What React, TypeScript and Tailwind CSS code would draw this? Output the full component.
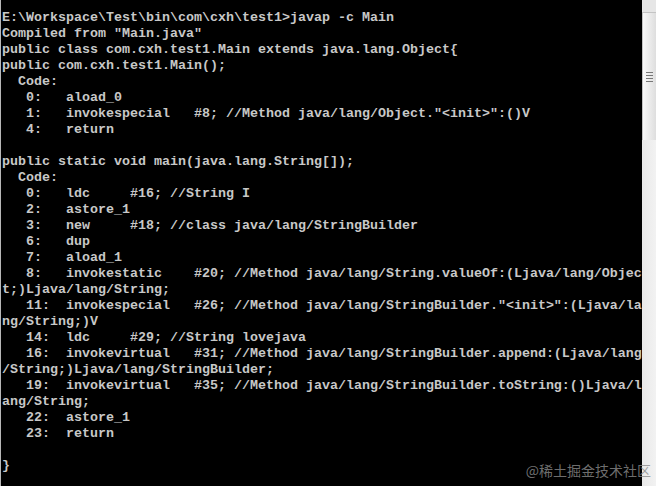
const lines: string[] = [
  "E:\\Workspace\\Test\\bin\\com\\cxh\\test1>javap -c Main",
  'Compiled from "Main.java"',
  "public class com.cxh.test1.Main extends java.lang.Object{",
  "public com.cxh.test1.Main();",
  "  Code:",
  "   0:   aload_0",
  '   1:   invokespecial   #8; //Method java/lang/Object."<init>":()V',
  "   4:   return",
  "",
  "public static void main(java.lang.String[]);",
  "  Code:",
  "   0:   ldc     #16; //String I",
  "   2:   astore_1",
  "   3:   new     #18; //class java/lang/StringBuilder",
  "   6:   dup",
  "   7:   aload_1",
  "   8:   invokestatic    #20; //Method java/lang/String.valueOf:(Ljava/lang/Objec",
  "t;)Ljava/lang/String;",
  '   11:  invokespecial   #26; //Method java/lang/StringBuilder."<init>":(Ljava/la',
  "ng/String;)V",
  "   14:  ldc     #29; //String lovejava",
  "   16:  invokevirtual   #31; //Method java/lang/StringBuilder.append:(Ljava/lang",
  "/String;)Ljava/lang/StringBuilder;",
  "   19:  invokevirtual   #35; //Method java/lang/StringBuilder.toString:()Ljava/l",
  "ang/String;",
  "   22:  astore_1",
  "   23:  return",
  "",
  "}",
];

function ScrollBar() {
  return (
    <div className="flex h-full w-[14px] flex-col bg-[#ececec]">
      <div className="h-[12px] bg-[#e6e6e6]" />
      {/* thumb */}
      <div className="flex h-[128px] flex-col items-center justify-center gap-[2px] border-t border-l border-[#c4c4c4] bg-gradient-to-r from-[#fafafa] to-[#dedede]">
        <div className="h-px w-[7px] bg-[#777]" />
        <div className="h-px w-[7px] bg-[#777]" />
        <div className="h-px w-[7px] bg-[#777]" />
        <div className="h-px w-[7px] bg-[#777]" />
      </div>
      <div className="flex-1 bg-gradient-to-r from-[#e9e9e9] to-[#f2f2f2]" />
    </div>
  );
}

export default function App() {
  return (
    <div className="relative flex h-[486px] w-[656px] overflow-hidden bg-black">
      <div className="w-px bg-[#b8b8b8]" />
      <div className="flex-1 overflow-hidden pt-[10px] pl-px">
        <pre className="font-['Liberation_Mono',monospace] text-[13.333px] leading-[16px] font-bold whitespace-pre text-[#c8c8c8]">
          {lines.map((l, i) => (
            <div key={i} className="h-[16px]">
              {l}
            </div>
          ))}
        </pre>
      </div>
      <ScrollBar />

      {/* watermark */}
      <div className="absolute right-[5px] bottom-[5px] font-['Noto_Sans_CJK_SC',sans-serif] text-[14px] text-[#8c8c8c]/80">
        @稀土掘金技术社区
      </div>
    </div>
  );
}
